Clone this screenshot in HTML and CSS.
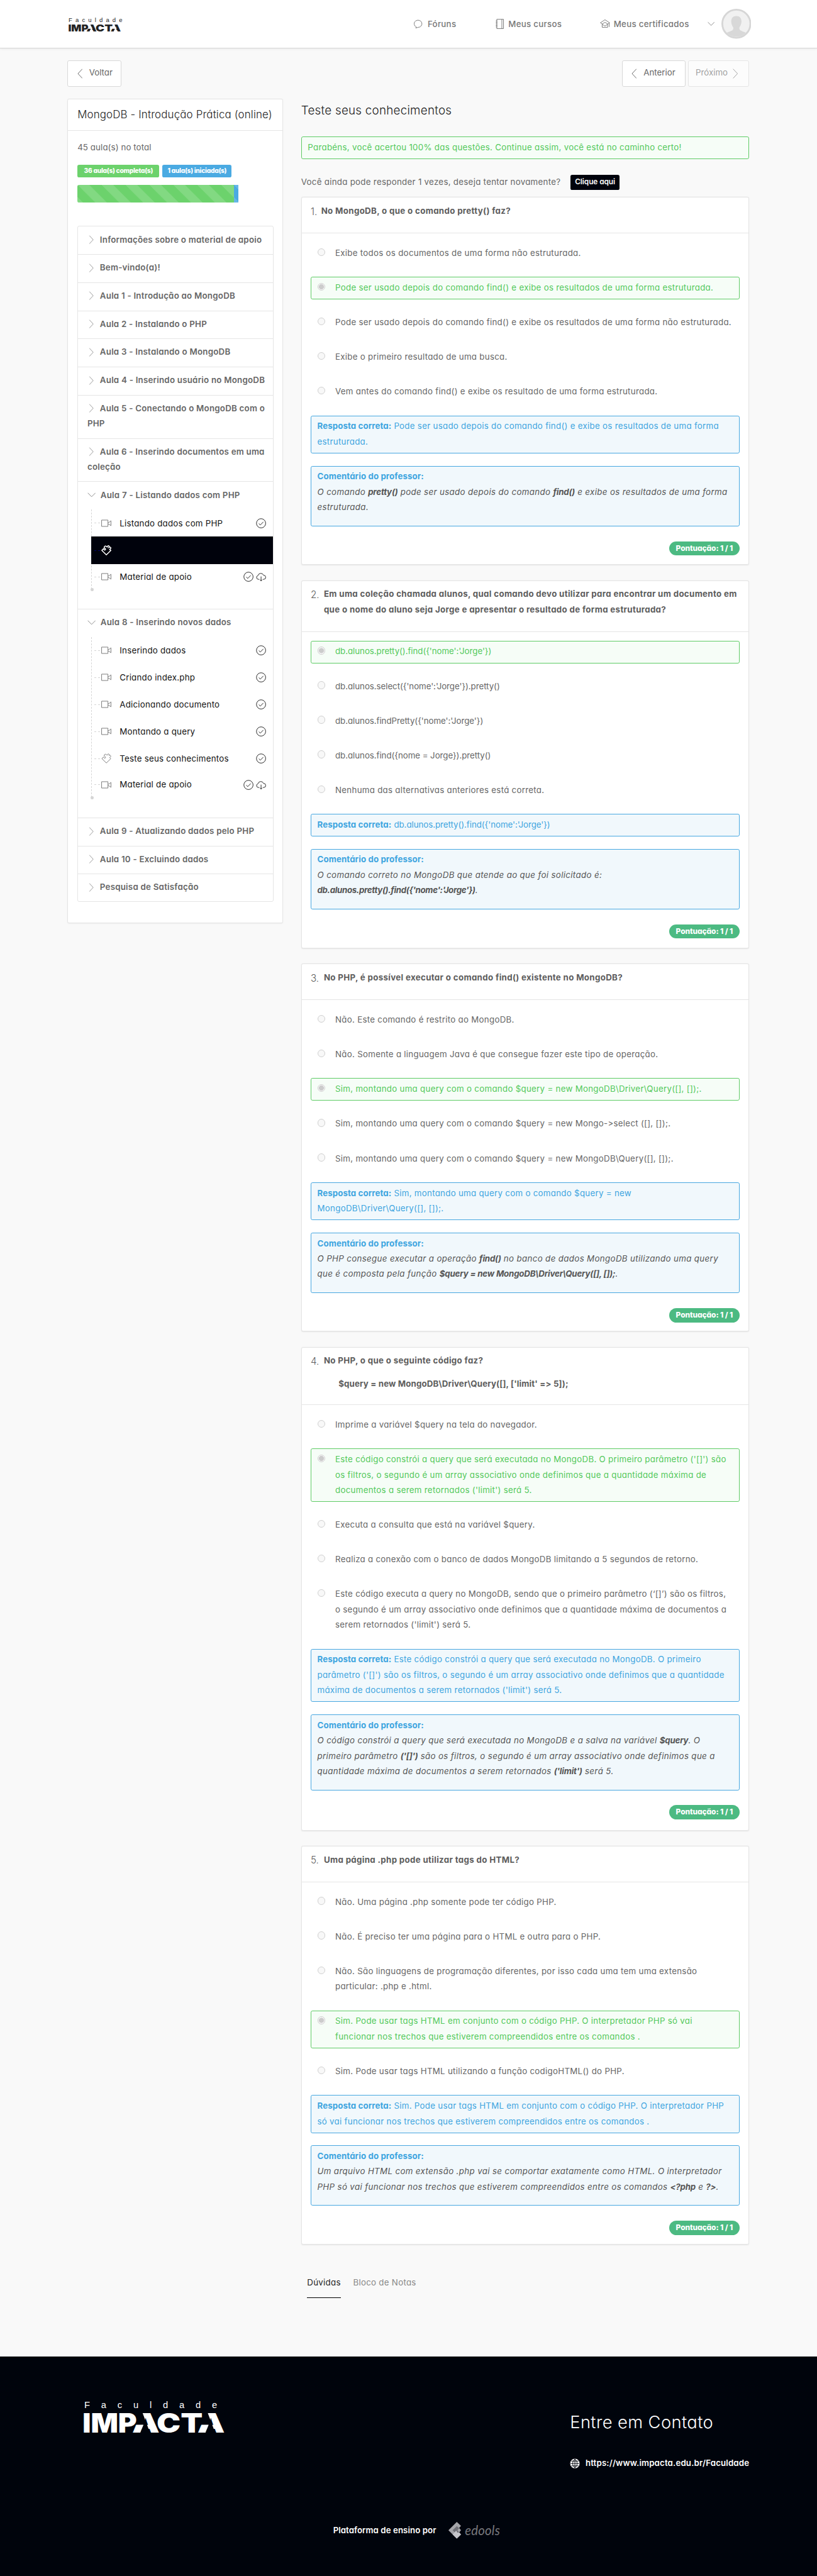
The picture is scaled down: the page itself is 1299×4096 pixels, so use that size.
FILE: index.html
```html
<!DOCTYPE html>
<html lang="pt-BR">
<head>
<meta charset="utf-8">
<title>Teste seus conhecimentos</title>
<link rel="stylesheet" href="styles.css">
</head>
<body>
<svg class="defs" width="0" height="0">
  <symbol id="left" viewBox="0 0 9 17"><path d="M8.3.7 1 8.5l7.3 7.8"/></symbol>
  <symbol id="right" viewBox="0 0 9 17"><path d="M.7.7 8 8.5.7 16.3"/></symbol>
  <symbol id="down" viewBox="0 0 14 8"><path d="M.6.8 7 7.2 13.4.8"/></symbol>
  <symbol id="video" viewBox="0 0 17 13"><path d="M.6 1h10.6v10.600H.6zM11.200 5h1.600l3.400-2.800v8.200l-3.400-2.600h-1.600"/></symbol>
  <symbol id="puzzle" viewBox="0 0 17 17"><path d="M8.500 16 1 8.600 3.800 5.800c1 .6.600 2.400 2.200 2.200 1.700-.3 1.400-2.500-.2-3C4.500 4.400 4.600 1.600 6.800 1.300c1.700-.2 2.300 1.600 3 1.600.9 0 .3-1.900 2-2.100 1.500-.2 1.800 1.700 1.200 2.600 1.600-.8 3.300 0 3 1.500-.2 1.300-1.900 1.300-1.900 2.100 0 .6 1.600 1 1.900 1.700z"/></symbol>
  <symbol id="check" viewBox="0 0 17 17"><circle cx="8.500" cy="8.500" r="7.700"/><path d="m4.800 8.900 2.500 2.400 5-5.200"/></symbol>
  <symbol id="cloud" viewBox="0 0 17 17"><path d="M5.500 12.800H4a3.200 3.200 0 0 1-.6-6.300A4.800 4.800 0 0 1 12.600 6a3.400 3.400 0 0 1 .6 6.800h-1.700M8.500 8v7.500M6.600 13.400l1.900 2.100 1.900-2.100"/></symbol>
</svg>

<header class="top">
  <svg class="logo" width="90" height="26" viewBox="0 0 90 26">
    <text class="logo-small" x="0" y="8" font-size="10" textLength="90">Faculdade</text>
    <g class="logo-big" transform="translate(0.5 12.800) scale(.370 .360)">
      <text x="80" y="32" textLength="46" lengthAdjust="spacingAndGlyphs">A</text>
      <path d="M76-2H97L110.500 34H93L99 19H76z"/>
      <text x="189" y="32" textLength="46" lengthAdjust="spacingAndGlyphs">A</text>
      <path d="M185-2H206L219.500 34H202L208 19H185z"/>
      <text x="-3" y="32" textLength="91" lengthAdjust="spacingAndGlyphs">IMP</text>
      <text x="121" y="32" textLength="77" lengthAdjust="spacingAndGlyphs">CT</text>
    </g>
  </svg>
  <nav class="nav">
    <a class="n1"><svg width="17" height="16" viewBox="0 0 17 16"><path d="M4 13.500A6.500 6 0 1 1 7 14.200L3.200 15.300z"/></svg>Fóruns</a>
    <a class="n2"><svg width="14" height="17" viewBox="0 0 14 17"><path d="M2 .7h11.200v15.600H2zM10.500.7v15.600M.3 3.500H3M.3 6H3M.3 8.500H3M.3 11H3M.3 13.500H3"/></svg>Meus cursos</a>
    <a class="n3"><svg width="17" height="16" viewBox="0 0 17 16"><path d="m.7 6.500 7.600-5 7.700 5-3 2M.7 6.500l2.900 2v5.600h9.200V8.500L8.300 5.800l-4.700 2.700M3.600 9l4.700 3 4.500-3M15.500 7v6.500"/></svg>Meus certificados</a>
    <svg class="caret" width="12" height="8" viewBox="0 0 14 8"><use href="#down"/></svg>
    <svg class="avatar" width="50" height="50" viewBox="0 0 50 50"><circle cx="25" cy="25" r="23.500" fill="#f1f1f1" stroke="#d6d6d6" stroke-width="3"/><path d="M25 12c-6 0-9 4-8.500 10 .4 5 2.300 7 3.500 9.500 0 5-2 4.500-11 8.500a22 22 0 0 0 32 0c-9-4-11-3.500-11-8.500 1.200-2.500 3.100-4.500 3.500-9.500.5-6-2.500-10-8.500-10z" fill="#d8d8d8" stroke="none"/></svg>
  </nav>
</header>

<div class="bar">
  <a class="btn back"><svg width="9" height="17"><use href="#left"/></svg>Voltar</a>
  <a class="btn prev"><svg width="9" height="17"><use href="#left"/></svg>Anterior</a>
  <a class="btn next">Próximo<svg width="9" height="17"><use href="#right"/></svg></a>
</div>

<div class="columns">
  <aside class="side">
    <h2>MongoDB - Introdução Prática (online)</h2>
    <p class="total">45 aula(s) no total</p>
    <div class="labels"><span class="label green">36 aula(s) completa(s)</span><span class="label blue">1 aula(s) iniciada(s)</span></div>
    <div class="progress"><i class="done"></i><i class="started"></i></div>
    <div class="acc">
      <div class="row"><svg class="ar" width="9" height="15" viewBox="0 0 9 17"><use href="#right"/></svg>Informações sobre o material de apoio</div>
      <div class="row"><svg class="ar" width="9" height="15" viewBox="0 0 9 17"><use href="#right"/></svg>Bem-vindo(a)!</div>
      <div class="row"><svg class="ar" width="9" height="15" viewBox="0 0 9 17"><use href="#right"/></svg>Aula 1 - Introdução ao MongoDB</div>
      <div class="row"><svg class="ar" width="9" height="15" viewBox="0 0 9 17"><use href="#right"/></svg>Aula 2 - Instalando o PHP</div>
      <div class="row"><svg class="ar" width="9" height="15" viewBox="0 0 9 17"><use href="#right"/></svg>Aula 3 - Instalando o MongoDB</div>
      <div class="row"><svg class="ar" width="9" height="15" viewBox="0 0 9 17"><use href="#right"/></svg>Aula 4 - Inserindo usuário no MongoDB</div>
      <div class="row two"><svg class="ar" width="9" height="15" viewBox="0 0 9 17"><use href="#right"/></svg>Aula 5 - Conectando o MongoDB com o<br>PHP</div>
      <div class="row two"><svg class="ar" width="9" height="15" viewBox="0 0 9 17"><use href="#right"/></svg>Aula 6 - Inserindo documentos em uma<br>coleção</div>
      <div class="row open o7"><svg class="ad" width="14" height="8"><use href="#down"/></svg>Aula 7 - Listando dados com PHP
        <div class="tree">
          <div class="item"><svg width="17" height="13"><use href="#video"/></svg><span>Listando dados com PHP</span><svg class="st" width="17" height="17"><use href="#check"/></svg></div>
          <div class="item active"><svg width="17" height="17"><use href="#puzzle"/></svg></div>
          <div class="item"><svg width="17" height="13"><use href="#video"/></svg><span>Material de apoio</span><svg class="st" width="17" height="17"><use href="#check"/></svg><svg class="st" width="17" height="17"><use href="#cloud"/></svg></div>
        </div>
      </div>
      <div class="row open o8"><svg class="ad" width="14" height="8"><use href="#down"/></svg>Aula 8 - Inserindo novos dados
        <div class="tree">
          <div class="item"><svg width="17" height="13"><use href="#video"/></svg><span>Inserindo dados</span><svg class="st" width="17" height="17"><use href="#check"/></svg></div>
          <div class="item"><svg width="17" height="13"><use href="#video"/></svg><span>Criando index.php</span><svg class="st" width="17" height="17"><use href="#check"/></svg></div>
          <div class="item"><svg width="17" height="13"><use href="#video"/></svg><span>Adicionando documento</span><svg class="st" width="17" height="17"><use href="#check"/></svg></div>
          <div class="item"><svg width="17" height="13"><use href="#video"/></svg><span>Montando a query</span><svg class="st" width="17" height="17"><use href="#check"/></svg></div>
          <div class="item"><svg width="17" height="17"><use href="#puzzle"/></svg><span>Teste seus conhecimentos</span><svg class="st" width="17" height="17"><use href="#check"/></svg></div>
          <div class="item"><svg width="17" height="13"><use href="#video"/></svg><span>Material de apoio</span><svg class="st" width="17" height="17"><use href="#check"/></svg><svg class="st" width="17" height="17"><use href="#cloud"/></svg></div>
        </div>
      </div>
      <div class="row"><svg class="ar" width="9" height="15" viewBox="0 0 9 17"><use href="#right"/></svg>Aula 9 - Atualizando dados pelo PHP</div>
      <div class="row"><svg class="ar" width="9" height="15" viewBox="0 0 9 17"><use href="#right"/></svg>Aula 10 - Excluindo dados</div>
      <div class="row last"><svg class="ar" width="9" height="15" viewBox="0 0 9 17"><use href="#right"/></svg>Pesquisa de Satisfação</div>
    </div>
  </aside>

  <main class="main">
    <h1>Teste seus conhecimentos</h1>
    <div class="alert">Parabéns, você acertou 100% das questões. Continue assim, você está no caminho certo!</div>
    <div class="retry"><span>Você ainda pode responder 1 vezes, deseja tentar novamente?</span><a>Clique aqui</a></div>

    <section class="card c1">
      <header class="q"><span>1.</span><b>No MongoDB, o que o comando pretty() faz?</b></header>
      <div class="opt"><i></i><p>Exibe todos os documentos de uma forma não estruturada.</p></div>
      <div class="opt ok"><i></i><p>Pode ser usado depois do comando find() e exibe os resultados de uma forma estruturada.</p></div>
      <div class="opt"><i></i><p>Pode ser usado depois do comando find() e exibe os resultados de uma forma não estruturada.</p></div>
      <div class="opt"><i></i><p>Exibe o primeiro resultado de uma busca.</p></div>
      <div class="opt"><i></i><p>Vem antes do comando find() e exibe os resultado de uma forma estruturada.</p></div>
      <div class="box"><b>Resposta correta:</b> Pode ser usado depois do comando find() e exibe os resultados de uma forma<br>estruturada.</div>
      <div class="box note"><b>Comentário do professor:</b><br><em>O comando <strong>pretty()</strong> pode ser usado depois do comando <strong>find()</strong> e exibe os resultados de uma forma<br>estruturada.</em></div>
      <div class="score"><span>Pontuação: 1 / 1</span></div>
    </section>

    <section class="card c2">
      <header class="q"><span>2.</span><b>Em uma coleção chamada alunos, qual comando devo utilizar para encontrar um documento em<br>que o nome do aluno seja Jorge e apresentar o resultado de forma estruturada?</b></header>
      <div class="opt ok"><i></i><p class="code">db.alunos.pretty().find({'nome':'Jorge'})</p></div>
      <div class="opt"><i></i><p class="code">db.alunos.select({'nome':'Jorge'}).pretty()</p></div>
      <div class="opt"><i></i><p class="code">db.alunos.findPretty({'nome':'Jorge'})</p></div>
      <div class="opt"><i></i><p class="code">db.alunos.find({nome = Jorge}).pretty()</p></div>
      <div class="opt"><i></i><p>Nenhuma das alternativas anteriores está correta.</p></div>
      <div class="box"><b>Resposta correta:</b> <span class="code">db.alunos.pretty().find({'nome':'Jorge'})</span></div>
      <div class="box note"><b>Comentário do professor:</b><br><em>O comando correto no MongoDB que atende ao que foi solicitado é:<br><strong class="code">db.alunos.pretty().find({'nome':'Jorge'})</strong>.</em></div>
      <div class="score"><span>Pontuação: 1 / 1</span></div>
    </section>

    <section class="card c3">
      <header class="q"><span>3.</span><b>No PHP, é possível executar o comando find() existente no MongoDB?</b></header>
      <div class="opt"><i></i><p>Não. Este comando é restrito ao MongoDB.</p></div>
      <div class="opt"><i></i><p>Não. Somente a linguagem Java é que consegue fazer este tipo de operação.</p></div>
      <div class="opt ok"><i></i><p>Sim, montando uma query com o comando $query = new MongoDB\Driver\Query([], []);.</p></div>
      <div class="opt"><i></i><p>Sim, montando uma query com o comando $query = new Mongo-&gt;select ([], []);.</p></div>
      <div class="opt"><i></i><p>Sim, montando uma query com o comando $query = new MongoDB\Query([], []);.</p></div>
      <div class="box"><b>Resposta correta:</b> Sim, montando uma query com o comando $query = new<br>MongoDB\Driver\Query([], []);.</div>
      <div class="box note"><b>Comentário do professor:</b><br><em>O PHP consegue executar a operação <strong>find()</strong> no banco de dados MongoDB utilizando uma query<br>que é composta pela função <strong>$query = new MongoDB\Driver\Query([], []);</strong>.</em></div>
      <div class="score"><span>Pontuação: 1 / 1</span></div>
    </section>

    <section class="card c4">
      <header class="q"><span>4.</span><b>No PHP, o que o seguinte código faz?<code>$query = new MongoDB\Driver\Query([], ['limit' =&gt; 5]);</code></b></header>
      <div class="opt"><i></i><p>Imprime a variável $query na tela do navegador.</p></div>
      <div class="opt ok"><i></i><p>Este código constrói a query que será executada no MongoDB. O primeiro parâmetro ('[]') são<br>os filtros, o segundo é um array associativo onde definimos que a quantidade máxima de<br>documentos a serem retornados ('limit') será 5.</p></div>
      <div class="opt"><i></i><p>Executa a consulta que está na variável $query.</p></div>
      <div class="opt"><i></i><p>Realiza a conexão com o banco de dados MongoDB limitando a 5 segundos de retorno.</p></div>
      <div class="opt"><i></i><p>Este código executa a query no MongoDB, sendo que o primeiro parâmetro (‘[]’) são os filtros,<br>o segundo é um array associativo onde definimos que a quantidade máxima de documentos a<br>serem retornados ('limit') será 5.</p></div>
      <div class="box"><b>Resposta correta:</b> Este código constrói a query que será executada no MongoDB. O primeiro<br>parâmetro ('[]') são os filtros, o segundo é um array associativo onde definimos que a quantidade<br>máxima de documentos a serem retornados ('limit') será 5.</div>
      <div class="box note"><b>Comentário do professor:</b><br><em>O código constrói a query que será executada no MongoDB e a salva na variável <strong>$query</strong>. O<br>primeiro parâmetro <strong>('[]')</strong> são os filtros, o segundo é um array associativo onde definimos que a<br>quantidade máxima de documentos a serem retornados <strong>('limit')</strong> será 5.</em></div>
      <div class="score"><span>Pontuação: 1 / 1</span></div>
    </section>

    <section class="card c5">
      <header class="q"><span>5.</span><b>Uma página .php pode utilizar tags do HTML?</b></header>
      <div class="opt"><i></i><p>Não. Uma página .php somente pode ter código PHP.</p></div>
      <div class="opt"><i></i><p>Não. É preciso ter uma página para o HTML e outra para o PHP.</p></div>
      <div class="opt"><i></i><p>Não. São linguagens de programação diferentes, por isso cada uma tem uma extensão<br>particular: .php e .html.</p></div>
      <div class="opt ok"><i></i><p>Sim. Pode usar tags HTML em conjunto com o código PHP. O interpretador PHP só vai<br>funcionar nos trechos que estiverem compreendidos entre os comandos .</p></div>
      <div class="opt"><i></i><p>Sim. Pode usar tags HTML utilizando a função codigoHTML() do PHP.</p></div>
      <div class="box"><b>Resposta correta:</b> Sim. Pode usar tags HTML em conjunto com o código PHP. O interpretador PHP<br>só vai funcionar nos trechos que estiverem compreendidos entre os comandos .</div>
      <div class="box note"><b>Comentário do professor:</b><br><em>Um arquivo HTML com extensão .php vai se comportar exatamente como HTML. O interpretador<br>PHP só vai funcionar nos trechos que estiverem compreendidos entre os comandos <strong>&lt;?php</strong> e <strong>?&gt;</strong>.</em></div>
      <div class="score"><span>Pontuação: 1 / 1</span></div>
    </section>

    <div class="tabs"><a class="on">Dúvidas</a><a>Bloco de Notas</a></div>
  </main>
</div>

<footer class="foot">
  <div class="foot-main">
    <svg class="foot-logo" width="240" height="58" viewBox="0 0 240 58">
      <text class="logo-small" x="0" y="12.500" font-size="15.500" textLength="222">Faculdade</text>
      <g class="logo-big" transform="translate(0 21.500)">
        <text x="80" y="32" textLength="46" lengthAdjust="spacingAndGlyphs">A</text>
        <path d="M76-2H97L110.500 34H93L99 19H76z"/>
        <text x="189" y="32" textLength="46" lengthAdjust="spacingAndGlyphs">A</text>
        <path d="M185-2H206L219.500 34H202L208 19H185z"/>
        <text x="-3" y="32" textLength="91" lengthAdjust="spacingAndGlyphs">IMP</text>
        <text x="121" y="32" textLength="77" lengthAdjust="spacingAndGlyphs">CT</text>
      </g>
    </svg>
    <div class="contact">
      <h3>Entre em Contato</h3>
      <a><svg width="17" height="17" viewBox="0 0 17 17"><circle cx="8.500" cy="8.500" r="8" fill="#fff"/><path d="M8.500 1v15M1 8.500h15M2.500 4.500h12M2.500 12.500h12M8.500 1c-5 5-5 10 0 15M8.500 1c5 5 5 10 0 15" fill="none" stroke="#00040c"/></svg>https://www.impacta.edu.br/Faculdade</a>
    </div>
  </div>
  <div class="powered"><span>Plataforma de ensino por</span>
    <svg width="22" height="28" viewBox="0 0 22 28"><path d="m14 0 7 6.500-3 3.500 3 4-3 3.500 3 3.500-7 7L0 14z" fill="#a5a5aa"/><path d="m14 7 4 3.500-3 3.500 3 3.500-4 3.500L7 14z" fill="#707077"/><path d="m14 28-7-7 6-6.500 2 3.500 3-.5 3 3.500z" fill="#c5c5ca"/></svg>
    <em>edools</em></div>
</footer>
</body>
</html>
```
FILE: styles.css
```css
* { box-sizing: border-box; }
html { overflow: hidden; background: #f9f9f9; }
body {
  margin: 0; width: 1366px; zoom: .9509; background: #f9f9f9; color: #666; overflow: hidden;
  font: 400 14px/25.71px Inter, "Liberation Sans", sans-serif;
  font-feature-settings: "cv11"; white-space: nowrap; letter-spacing: .3px;
}
h1, h2, h3, p { margin: 0; font-weight: 300; }
svg { fill: none; stroke: currentColor; stroke-width: 1; flex: none; }
.defs { position: absolute; }
.logo-small { font-family: "Liberation Sans", sans-serif; stroke: none; fill: currentColor; letter-spacing: 0; }
.logo-big { font: 900 44px Inter, sans-serif; letter-spacing: 0; stroke: none; fill: currentColor; }
.logo, .foot-logo { overflow: visible; }
.logo path { fill: #fff; }
.foot-logo path { fill: #00040c; }

.top { height: 81px; padding: 0 110px 0 115px; background: #fff; border-bottom: 1px solid #d6d6d6; box-shadow: 0 1px 5px rgba(0,0,0,.1); display: flex; color: #222; }
.logo { margin-top: 28px; }
.nav { margin-left: auto; display: flex; align-items: center; color: #777; font-weight: 500; font-size: 14px; }
.nav a { display: flex; align-items: center; gap: 6px; height: 26px; }
.n1 { width: 137px; } .n2 { width: 174px; } .n2 svg { margin-right: 1px; } .n3 { width: 180px; }
.caret { margin-right: 11px; }

.bar { display: flex; padding: 20px 113px 0; height: 84px; }
.btn { height: 44px; border: 1px solid #d8d8d8; border-radius: 3px; background: #fff; display: flex; align-items: center; padding: 0 12px 3px 15px; letter-spacing: 0; }
.btn svg { margin-top: 3px; }
.btn svg:first-child { margin-right: 11px; }
.back { width: 90px; }
.prev { width: 106px; margin-left: auto; }
.next { width: 103px; margin-left: 4px; opacity: .6; padding-left: 12px; }
.next svg { margin-left: 8px; }

.columns { display: flex; gap: 30px; padding: 0 113px; height: 3776px; align-items: flex-start; }
.side { width: 360.500px; height: 1379px; background: #fff; border: 1px solid #e5e5e5; border-radius: 3px; box-shadow: 0 1px 2px rgba(0,0,0,.05); padding: 0 15.500px; }
.side h2 { height: 53px; margin: 0 -15.500px; padding: 0 15.500px; line-height: 51px; font-size: 17.800px; letter-spacing: .15px; border-bottom: 1px solid #e5e5e5; color: #222; }
.total { font-weight: 400; margin-top: 14px; height: 43px; letter-spacing: .1px; }
.labels { display: flex; gap: 5px; font-size: 10.800px; font-weight: 800; color: #fff; }
.label { height: 21px; line-height: 19px; border-radius: 3px; text-align: center; letter-spacing: -.3px; }
.green { width: 137px; background: #6cd26c; }
.blue { width: 116px; background: #4aaae2; }
.progress { display: flex; height: 30px; margin: 12px 0 39px; }
.progress i { background-image: linear-gradient(45deg, rgba(255,255,255,.15) 25%, transparent 25%, transparent 50%, rgba(255,255,255,.15) 50%, rgba(255,255,255,.15) 75%, transparent 75%); background-size: 40px 40px; }
.done { width: 262px; background-color: #6cd26c; border-radius: 3px 0 0 3px; }
.started { width: 7px; background-color: #4aaae2; }

.acc { width: 327.500px; border: 1px solid #e5e5e5; border-radius: 3px; }
.row { height: 47px; border-bottom: 1px solid #e5e5e5; padding: 8.500px 0 0 15.500px; font-weight: 600; font-size: 14px; color: #666; letter-spacing: .25px; }
.two { height: 72.500px; }
.last { height: 45px; border: 0; }
.ar { vertical-align: -3px; margin: 0 10px 0 2px; color: #888; }
.ad { vertical-align: 1px; margin-right: 8px; color: #888; }
.o7 { height: 213px; } .o8 { height: 349px; }
.tree { margin: 12px 0 0 6.500px; border-left: 1px dashed #d5d5d5; position: relative; color: #111; font-weight: 400; font-size: 14px; letter-spacing: .25px; }
.tree::after { content: ""; position: absolute; left: -2px; bottom: -3px; width: 5px; height: 5px; border-radius: 50%; background: #d5d5d5; }
.item { height: 45.200px; display: flex; align-items: center; padding: 0 10.500px 0 4px; }
.item:last-child { height: 42px; }
.item::before { content: ""; width: 10px; border-top: 1px dashed #d5d5d5; margin-right: 2px; }
.item svg { color: #777; }
.item span { margin: 0 auto 0 13.500px; }
.item .st { color: #222; margin-left: 5px; }
.item.active { background: #00020c; margin-left: -1px; padding-left: 5px; height: 46px; }
.item.active::before { border-color: #00006c; }
.item.active svg { color: #fff; stroke-width: 1.600; }

.main { width: 750px; }
.main h1 { font-size: 19.800px; line-height: 30px; height: 63px; padding-top: 5px; color: #222; letter-spacing: .25px; }
.alert { height: 38px; padding: 0 10px; line-height: 34px; border: 1px solid #5ecb65; border-radius: 3px; background: #f6fdf7; color: #53c95b; }
.retry { height: 51.500px; padding-top: 24px; margin-bottom: 12px; display: flex; align-items: center; }
.retry span { width: 438.500px; }
.retry a { margin: 3px 0 0 12px; width: 82px; height: 25px; border-radius: 3px; background: #00020c; color: #fff; font-weight: 600; font-size: 12.500px; line-height: 24px; letter-spacing: -.1px; text-align: center; }

.card { background: #fff; border: 1px solid #e5e5e5; border-radius: 3px; box-shadow: 0 1px 2px rgba(0,0,0,.08); padding: 0 15px; margin-bottom: 25.700px; }
.c1 { height: 615px; } .c2 { height: 615.700px; } .c3 { height: 615px; } .c4 { height: 808.600px; } .c5 { height: 667px; }
.q { display: flex; margin: 0 -15px 14.500px; padding: 9px 15px 0; height: 60px; border-bottom: 1px solid #e5e5e5; color: #5d5d5d; font-size: 14px; }
.q span { width: 22px; padding-top: 2px; font-size: 16px; font-weight: 300; letter-spacing: 0; }
.c1 .q span { width: 17.500px; }
.q b { font-weight: 700; letter-spacing: .35px; }
.c2 .q { height: 85.500px; } .c4 .q { height: 96.500px; }
.q code { display: block; font: inherit; padding: 12.500px 0 0 24.500px; letter-spacing: .15px; }
.opt { display: flex; border: 1px solid transparent; border-radius: 3px; padding: 4px 10px 6px; margin-bottom: 20.150px; }
.opt i { width: 13px; height: 13px; margin: 5px 17px 0 0; border: 1px solid #d0d0d0; border-radius: 50%; background: #f8f8f8; }
.opt p { font-weight: 400; }
.opt.ok { border-color: #5ecb65; background: #f6fdf7; color: #53c95b; }
.ok i { background: radial-gradient(circle, #ccc 4px, #f8f8f8 4.500px); }
.box { border: 1px solid #47a7e0; border-radius: 3px; background: #f1f8fc; color: #3ea5e0; padding: 4px 10px 6px; margin: 0 0 20.500px; }
.box b { font-weight: 700; letter-spacing: .1px; }
.box em { color: #555; letter-spacing: .38px; }
.box strong { font-weight: 700; letter-spacing: -.2px; }
.note { padding-bottom: 18px; margin-bottom: 25px; }
.code { letter-spacing: -.05px; }
.box strong.code { letter-spacing: -.35px; }
.score { display: flex; justify-content: flex-end; }
.score span { width: 118.500px; height: 24px; border-radius: 12px; background: #4cba82; color: #fff; text-align: center; font-size: 12.600px; font-weight: 800; line-height: 23px; letter-spacing: -.1px; }
.tabs { display: flex; gap: 20px; padding: 24px 10px 0; }
.tabs a { height: 39px; line-height: 27px; color: #888; }
.tabs .on { width: 57px; color: #222; border-bottom: 2px solid #000; }

.foot { height: 366.500px; background: #00040c; color: #fff; padding: 73px 112px 0 141px; }
.foot-main { display: flex; justify-content: space-between; height: 203px; }
.contact { width: 301px; padding-top: 18px; }
.contact h3 { font-size: 28.800px; line-height: 36px; letter-spacing: .4px; }
.contact a { display: flex; align-items: center; gap: 9px; margin-top: 38px; font-weight: 600; font-size: 14px; letter-spacing: .15px; }
.contact a svg { stroke: none; }
.powered { display: flex; align-items: center; margin-left: 416px; height: 28px; font-weight: 600; font-size: 14px; letter-spacing: .05px; }
.powered span { width: 192.500px; }
.powered svg { stroke: none; margin-right: 6px; }
.powered em { font: italic 400 21.500px/24px Lato, sans-serif; color: #77777c; letter-spacing: .2px; }
```
